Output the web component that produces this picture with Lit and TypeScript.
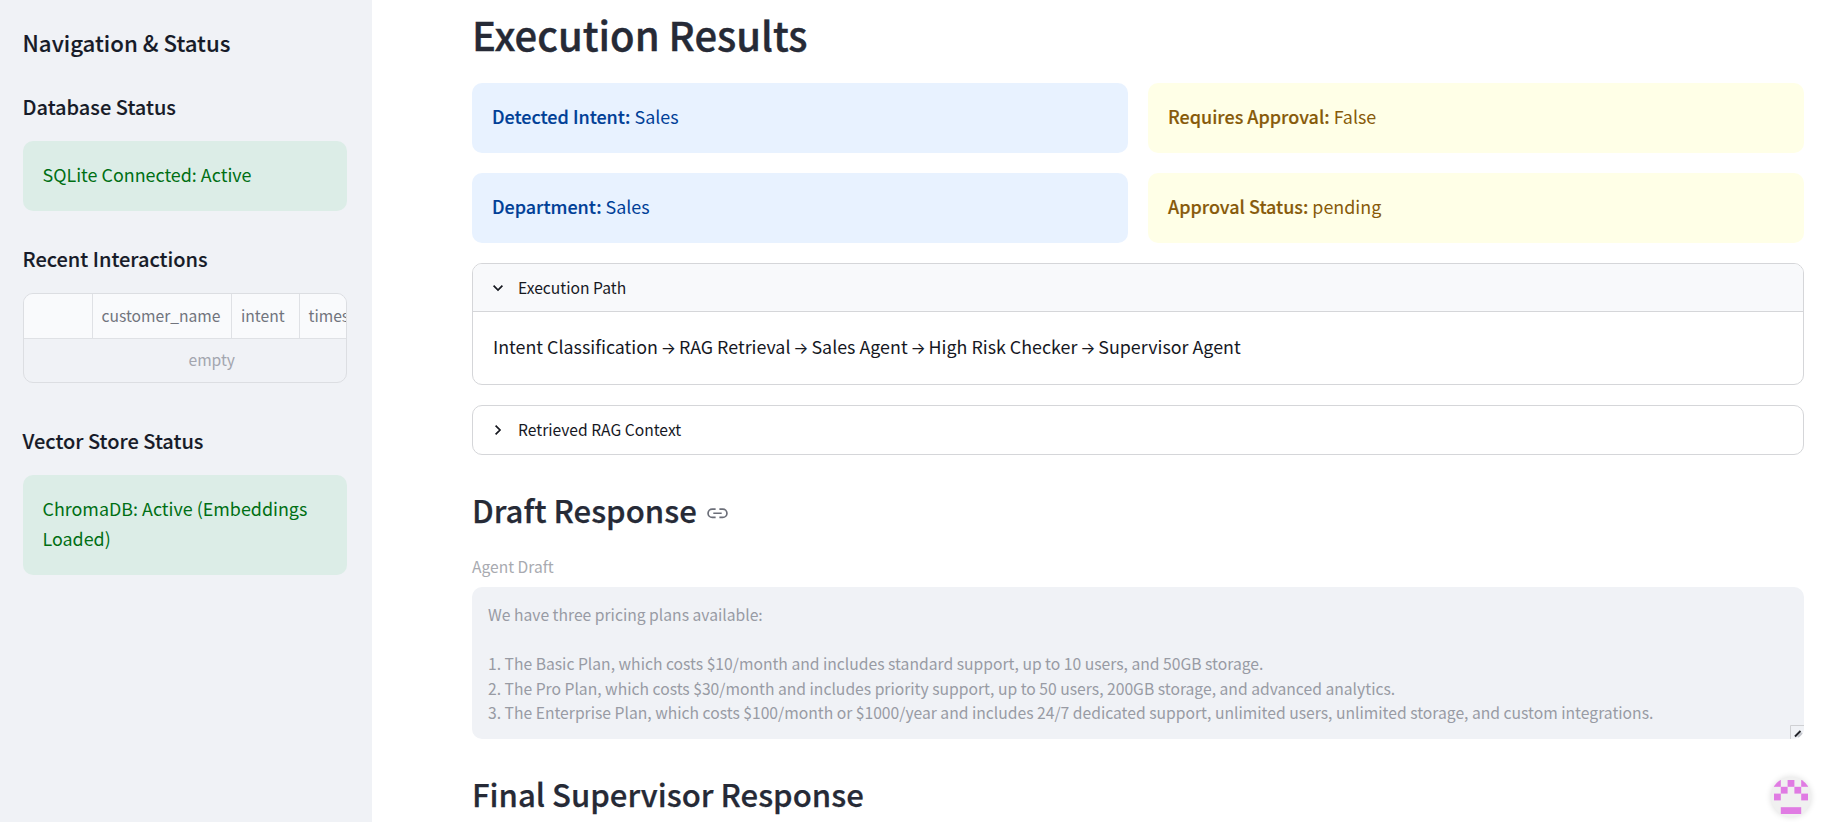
import { LitElement, css, html, svg } from "lit";
import { customElement, property } from "lit/decorators.js";

const fontStack = css`"Noto Sans CJK JP", "Noto Sans", sans-serif`;

@customElement("st-alert")
export class StAlert extends LitElement {
  @property()
  public kind: "success" | "info" | "warning" = "info";

  @property()
  public label = "";

  render() {
    return html`<div class="alert ${this.kind}">
      ${this.label ? html`<strong class="label">${this.label}</strong> ` : ""}<slot></slot>
    </div>`;
  }

  static styles = css`
    :host {
      display: block;
    }
    .alert {
      padding: 18px 20px 22px;
      border-radius: 10px;
      font: 400 17.9px/30px ${fontStack};
    }
    .label {
      font-weight: 500;
      font-size: 17.97px;
      -webkit-text-stroke: 0.15px currentColor;
    }
    .success {
      background: #dcede7;
      color: #006f14;
    }
    .info {
      background: #e8f2ff;
      color: #003f97;
    }
    .warning {
      background: #ffffe7;
      color: #875a0a;
    }
  `;
}

@customElement("st-expander")
export class StExpander extends LitElement {
  @property()
  public label = "";

  @property({ type: Boolean })
  public open = false;

  render() {
    return html`<div class="box">
      <div class="summary ${this.open ? "summary--open" : ""}">
        <svg class="chevron" viewBox="0 0 12 12">
          ${this.open
            ? svg`<path d="M1.6 3.6 L6 8 L10.4 3.6" />`
            : svg`<path d="M3.6 1.6 L8 6 L3.6 10.4" />`}
        </svg>
        <span>${this.label}</span>
      </div>
      ${this.open ? html`<div class="content"><slot></slot></div>` : ""}
    </div>`;
  }

  static styles = css`
    :host {
      display: block;
    }
    .box {
      border: 1px solid #d5d6d9;
      border-radius: 10px;
      overflow: hidden;
      color: #16181f;
      font: 400 15.65px/26px ${fontStack};
    }
    .summary {
      display: flex;
      align-items: center;
      box-sizing: border-box;
      gap: 14px;
      height: 48px;
      padding-left: 19px;
    }
    .summary--open {
      background: #f8f9fb;
      border-bottom: 1px solid #d5d6d9;
    }
    .chevron {
      width: 12px;
      height: 12px;
      fill: none;
      stroke: #16181f;
      stroke-width: 1.7;
    }
    .content {
      padding: 19px 20px 23px;
      font-size: 17.85px;
      line-height: 30px;
    }
  `;
}

@customElement("app-root")
export class AppRoot extends LitElement {
  private steps = [
    "Intent Classification",
    "RAG Retrieval",
    "Sales Agent",
    "High Risk Checker",
    "Supervisor Agent",
  ];

  private draft = [
    "We have three pricing plans available:",
    "",
    "1. The Basic Plan, which costs $10/month and includes standard support, up to 10 users, and 50GB storage.",
    "2. The Pro Plan, which costs $30/month and includes priority support, up to 50 users, 200GB storage, and advanced analytics.",
    "3. The Enterprise Plan, which costs $100/month or $1000/year and includes 24/7 dedicated support, unlimited users, unlimited storage, and custom integrations.",
  ];

  // filled cells of the 5x5 identicon, as [column, row, width]
  private cells = [
    [0, 0, 1],
    [2, 0, 1],
    [4, 0, 1],
    [1, 1, 1],
    [3, 1, 1],
    [0, 2, 1],
    [4, 2, 1],
    [1, 4, 3],
  ];

  render() {
    return html`
      <aside class="sidebar">${this.renderSidebar()}</aside>
      <main class="main">
        <h1 class="title">Execution Results</h1>
        <div class="alerts">
          <st-alert kind="info" label="Detected Intent:">Sales</st-alert>
          <st-alert kind="warning" label="Requires Approval:">False</st-alert>
          <st-alert kind="info" label="Department:">Sales</st-alert>
          <st-alert kind="warning" label="Approval Status:">pending</st-alert>
        </div>
        <st-expander class="path" label="Execution Path" open
          >${this.steps.map(
            (step, i) =>
              html`${i ? html` <span class="arrow">→</span> ` : ""}${step}`
          )}</st-expander
        >
        <st-expander class="context" label="Retrieved RAG Context"></st-expander>
        <h2 class="heading">
          Draft Response
          <svg class="link" viewBox="0 0 20 10">
            <path d="M8.2 1 H5 A4 4 0 0 0 5 9 H8.2 M11.8 1 H15 A4 4 0 0 1 15 9 H11.8 M6 5 H14" />
          </svg>
        </h2>
        <div class="caption">Agent Draft</div>
        <div class="textarea">
          ${this.draft.map((line) => html`<div class="line">${line}</div>`)}
          <svg class="grip" viewBox="0 0 14 14">
            <path class="grip-edge" d="M0.5 14 V0.5 H14" />
            <path class="grip-shade" d="M8 12 L12 8" />
            <path class="grip-mark" d="M5 11.5 L10.5 6" />
          </svg>
        </div>
        <h2 class="heading">Final Supervisor Response</h2>
      </main>
      ${this.renderAvatar()}
    `;
  }

  private renderSidebar() {
    return html`
      <h2 class="side-title">Navigation &amp; Status</h2>
      <h3 class="side-heading">Database Status</h3>
      <st-alert kind="success">SQLite Connected: Active</st-alert>
      <h3 class="side-heading">Recent Interactions</h3>
      <div class="table">
        <div class="table-head">
          <div class="cell"></div>
          <div class="cell">customer_name</div>
          <div class="cell">intent</div>
          <div class="cell">timestamp</div>
        </div>
        <div class="empty">empty</div>
      </div>
      <h3 class="side-heading vector">Vector Store Status</h3>
      <st-alert kind="success">ChromaDB: Active (Embeddings Loaded)</st-alert>
    `;
  }

  private renderAvatar() {
    return html`<div class="avatar">
      <svg class="identicon" viewBox="0 0 5 5">
        ${this.cells.map(
          ([x, y, w]) =>
            svg`<rect x=${x} y=${y} width=${w} height="1" />`
        )}
      </svg>
    </div>`;
  }

  static styles = css`
    :host {
      display: flex;
      position: relative;
      width: 100%;
      height: 822px;
      overflow: hidden;
      background: #fff;
      color: #262a36;
      font: 400 17.85px/30px ${fontStack};
    }
    h1,
    h2,
    h3 {
      margin: 0;
      font-weight: 500;
      -webkit-text-stroke: 0.12px currentColor;
    }
    .sidebar {
      box-sizing: border-box;
      flex: none;
      width: 372px;
      padding: 25px 25px 0 22.5px;
      background: #f0f2f6;
    }
    .side-title {
      color: #171b28;
      font-size: 22.25px;
      line-height: 34px;
    }
    .side-heading {
      margin: 32px 0 18px;
      color: #171b28;
      font-size: 20px;
      line-height: 32px;
    }
    .vector {
      margin-top: 42px;
    }
    .table {
      height: 88px;
      border: 1px solid #dcdee2;
      border-radius: 10px;
      overflow: hidden;
      font-size: 15.64px;
    }
    .table-head {
      display: grid;
      grid-template-columns: 69px 139.5px 67.5px 130px;
      height: 44px;
      background: #f9fafc;
      border-bottom: 1px solid #dfe1e5;
      color: #71747d;
      line-height: 44px;
    }
    .cell {
      box-sizing: border-box;
      padding-left: 9px;
      border-right: 1px solid #dfe1e5;
    }
    .empty {
      padding-left: 54px;
      color: #a3a6af;
      line-height: 41px;
      text-align: center;
    }
    .main {
      flex: 1;
      min-width: 0;
      padding: 6px 28px 0 100px;
    }
    .title {
      font-size: 40px;
      line-height: 56px;
      -webkit-text-stroke-width: 0.4px;
    }
    .alerts {
      display: grid;
      grid-template-columns: 1fr 1fr;
      gap: 20px;
      margin-top: 21px;
    }
    .path,
    .context {
      margin-top: 20px;
    }
    .arrow {
      display: inline-flex;
      justify-content: center;
      width: 13px;
      font: 400 16px/1 Inter, sans-serif;
      vertical-align: 0;
    }
    .heading {
      display: flex;
      align-items: center;
      gap: 10px;
      margin-top: 34px;
      font-size: 31.1px;
      line-height: 42px;
      -webkit-text-stroke-width: 0.25px;
    }
    .link {
      width: 21px;
      height: 10.5px;
      margin-top: 7px;
      fill: none;
      stroke: #6b6e78;
      stroke-width: 1.6;
    }
    .caption {
      margin-top: 22px;
      color: #a8aab0;
      font-size: 15.6px;
      line-height: 26px;
    }
    .textarea {
      box-sizing: border-box;
      position: relative;
      height: 152px;
      margin-top: 8px;
      padding: 16px 16px 12px;
      border-radius: 10px;
      background: #f0f2f6;
      color: #989ba4;
      font-size: 15.68px;
      line-height: 24.5px;
      overflow: hidden;
    }
    .line {
      min-height: 24.5px;
      white-space: nowrap;
    }
    .grip {
      position: absolute;
      right: 0;
      bottom: 0;
      width: 14px;
      height: 14px;
      fill: none;
    }
    .grip-edge {
      stroke: #cfd0d3;
    }
    .grip-mark {
      stroke: #22242a;
      stroke-width: 2;
    }
    .grip-shade {
      stroke: #c4c6cc;
      stroke-width: 2;
    }
    .avatar {
      position: absolute;
      right: 21px;
      bottom: 5px;
      display: flex;
      align-items: center;
      justify-content: center;
      width: 40px;
      height: 40px;
      border-radius: 50%;
      background: #f0f0f0;
      box-shadow: 0 0 6px rgba(0, 0, 0, 0.14);
      overflow: hidden;
    }
    .identicon {
      width: 34px;
      height: 34px;
      fill: #e07be3;
    }
  `;
}
